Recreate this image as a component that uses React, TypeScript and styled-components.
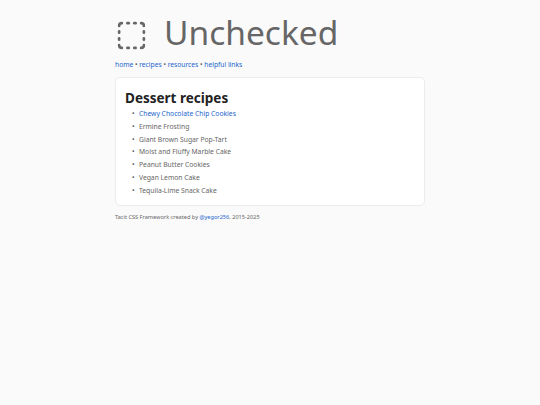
import React from "react";
import styled, { createGlobalStyle } from "styled-components";

const Global = createGlobalStyle`
  html, body { margin: 0; padding: 0; background: #fafafa; }
  body { font-family: "Noto Sans", "Open Sans", sans-serif; color: #555; }
`;

const Page = styled.div`
  width: 310px;
  margin: 0 auto;
  padding-top: 12px;
  display: flex;
  flex-direction: column;
`;

const Header = styled.header`
  display: flex;
  align-items: flex-start;
  gap: 16px;
  height: 40px;
`;

const IconBox = styled.span`
  display: flex;
  margin-top: 7px;
`;

const Title = styled.h1`
  margin: 0;
  font-size: 33.5px;
  font-weight: 400;
  color: #666;
  line-height: 40px;
`;

const Nav = styled.nav`
  margin-top: 8px;
  font-size: 6.7px;
  line-height: 10px;
  color: #555;
`;

const Link = styled.a`
  color: #2266cc;
  text-decoration: none;
`;

const Card = styled.section`
  margin-top: 7px;
  background: #fff;
  border: 1px solid #ececec;
  border-radius: 5px;
  padding: 11px 9px 7px;
`;

const CardTitle = styled.h2`
  margin: 0 0 1px;
  font-size: 13.5px;
  font-weight: 700;
  color: #222;
  line-height: 18px;
`;

const List = styled.ul`
  margin: 0;
  padding-left: 7px;
  list-style: none;
  font-size: 6.75px;
  line-height: 12.8px;
`;

const Item = styled.li`
  display: flex;
  color: #666;
  &::before {
    content: "•";
    flex: none;
    width: 7px;
    color: #555;
  }
`;

const Footer = styled.footer`
  margin-top: 7px;
  font-size: 5.6px;
  line-height: 8px;
  color: #666;
`;

const Icon = () => (
  <svg width="33" height="33" viewBox="0 0 24 24" fill="none" stroke="#666" strokeWidth="1.9" strokeLinecap="round" strokeLinejoin="round">
    <path d="M5 3a2 2 0 0 0-2 2" />
    <path d="M19 3a2 2 0 0 1 2 2" />
    <path d="M21 19a2 2 0 0 1-2 2" />
    <path d="M5 21a2 2 0 0 1-2-2" />
    <path d="M9 3h1" />
    <path d="M9 21h1" />
    <path d="M14 3h1" />
    <path d="M14 21h1" />
    <path d="M3 9v1" />
    <path d="M21 9v1" />
    <path d="M3 14v1" />
    <path d="M21 14v1" />
  </svg>
);

const recipes = [
  "Ermine Frosting",
  "Giant Brown Sugar Pop-Tart",
  "Moist and Fluffy Marble Cake",
  "Peanut Butter Cookies",
  "Vegan Lemon Cake",
  "Tequila-Lime Snack Cake",
];

export default function App() {
  return (
    <>
      <Global />
      <Page>
        <Header>
          <IconBox>
            <Icon />
          </IconBox>
          <Title>Unchecked</Title>
        </Header>
        <Nav>
          <Link href="#">home</Link> • <Link href="#">recipes</Link> • <Link href="#">resources</Link> • <Link href="#">helpful links</Link>
        </Nav>
        <Card>
          <CardTitle>Dessert recipes</CardTitle>
          <List>
            <Item><Link href="#">Chewy Chocolate Chip Cookies</Link></Item>
            {recipes.map((r) => (
              <Item key={r}>{r}</Item>
            ))}
          </List>
        </Card>
        <Footer>
          Tacit CSS Framework created by <Link href="#">@yegor256</Link>, 2015-2025
        </Footer>
      </Page>
    </>
  );
}
